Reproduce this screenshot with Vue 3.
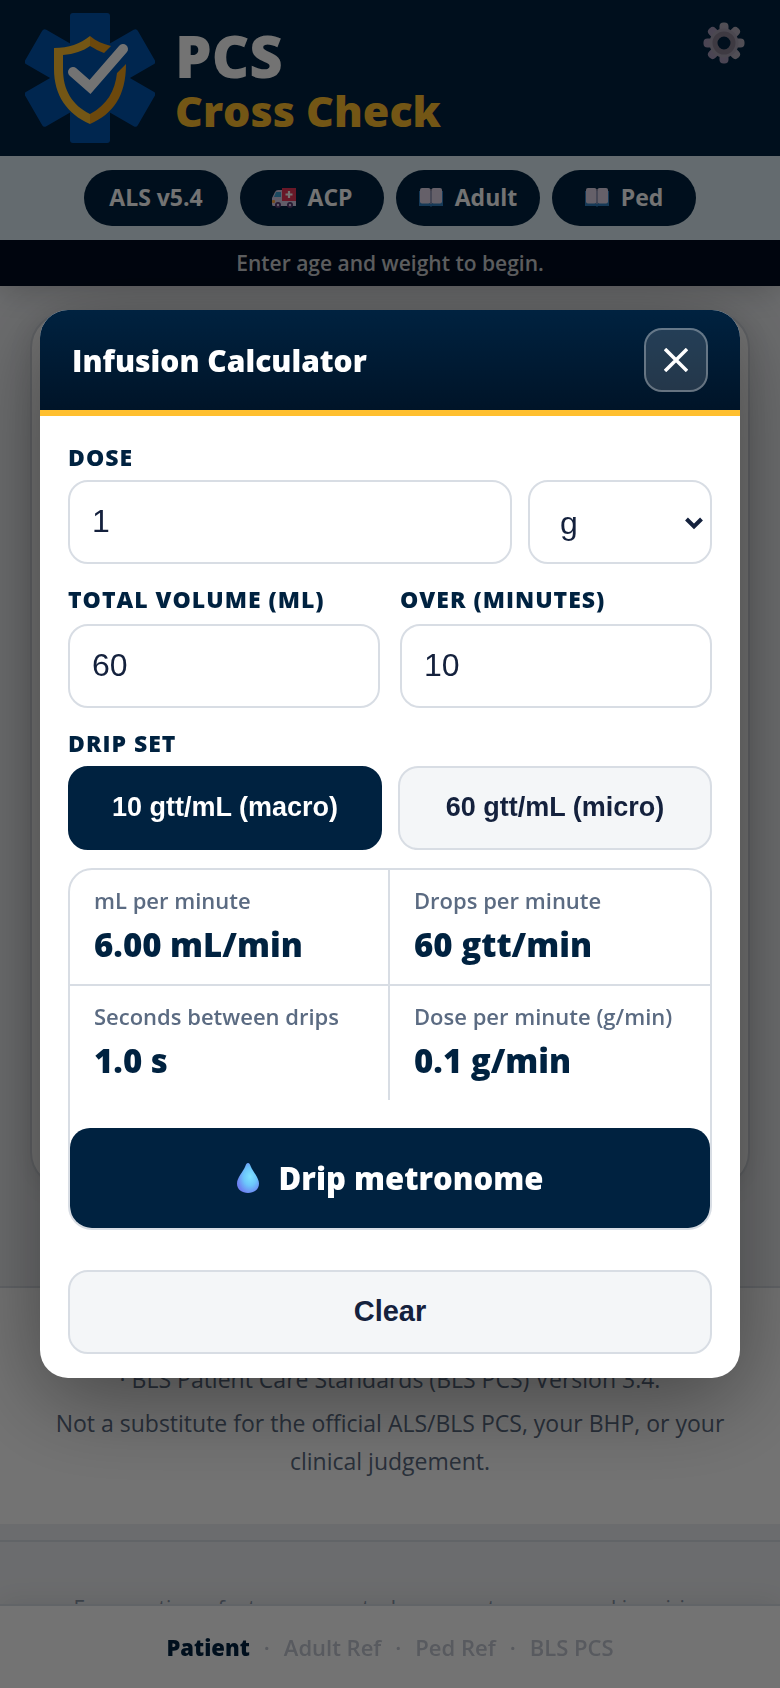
<template>
  <div class="page">
    <header class="site-header">
      <div class="brand-row">
        <svg class="logo" viewBox="0 0 130 130" aria-hidden="true">
          <g fill="#0055b0">
            <rect x="45" y="0" width="40" height="130" rx="3" />
            <rect x="45" y="0" width="40" height="130" rx="3" transform="rotate(60 65 65)" />
            <rect x="45" y="0" width="40" height="130" rx="3" transform="rotate(120 65 65)" />
          </g>
          <path
            d="M65 23C55 31 44 35 29 35V56C29 82 42 101 65 111V101C47 92 38 77 38 56V42C49 41 58 38 65 33Z"
            fill="#ffbf2f"
          />
          <path
            d="M65 23C71 28 78 31 86 33L79 40C74 38 70 36 65 33ZM101 51C101 83 88 101 65 111V101C82 92 90 78 92 60Z"
            fill="#ef9f1c"
          />
          <path
            d="M48 59L65 74L98 36"
            fill="none"
            stroke="#fff"
            stroke-width="10"
            stroke-linecap="round"
          />
        </svg>
        <div class="brand">
          <span class="brand-top">PCS</span>
          <span class="brand-bottom">Cross Check</span>
        </div>
        <button class="settings" type="button" aria-label="Settings">
          <svg viewBox="0 0 42 42" aria-hidden="true">
            <defs>
              <linearGradient id="gear" x1="0" y1="0" x2="0" y2="1">
                <stop offset="0" stop-color="#b4afbd" />
                <stop offset="1" stop-color="#a497b8" />
              </linearGradient>
            </defs>
            <g fill="url(#gear)">
              <rect
                v-for="a in [0, 45, 90, 135]"
                :key="a"
                x="16.5"
                y="0.5"
                width="9"
                height="41"
                rx="4"
                :transform="`rotate(${a} 21 21)`"
              />
            </g>
            <circle cx="21" cy="21" r="14.5" fill="#a79fb2" />
            <circle cx="21" cy="21" r="9" fill="#002240" stroke="#8a8293" stroke-width="5" />
          </svg>
        </button>
      </div>
      <div class="chips">
        <button v-for="chip in chips" :key="chip.label" class="chip" type="button">
          <svg v-if="chip.icon === 'ambulance'" class="chip-icon" viewBox="0 -2 24 24" aria-hidden="true">
            <path d="M10 1H24V18H10Z" fill="#e8375a" />
            <path d="M0 17V11L3 5Q4 3 6 3H10V14H24V19H1Q0 19 0 17Z" fill="#d9cfe8" />
            <path d="M2 10L4 5H9V10Z" fill="#3fa5d8" />
            <path d="M17 4V11M13.500 7.500H20.500" stroke="#fff" stroke-width="2.2" />
            <rect x="0" y="13" width="3" height="3" rx="1" fill="#ffa63d" />
            <circle cx="6" cy="18" r="3" fill="#54366e" />
            <circle cx="18" cy="18" r="3" fill="#54366e" />
            <circle cx="6" cy="18" r="1.2" fill="#d9cfe8" />
            <circle cx="18" cy="18" r="1.2" fill="#d9cfe8" />
          </svg>
          <svg v-if="chip.icon === 'book'" class="chip-icon" viewBox="0 -2 24 24" aria-hidden="true">
            <path d="M0 4H24V19H13L12 20L11 19H0Z" fill="#2f7fc0" />
            <rect x="1" y="1" width="10.5" height="15.5" rx="2" fill="#e0d6e8" />
            <rect x="12.5" y="1" width="10.5" height="15.5" rx="2" fill="#e0d6e8" />
            <path d="M12 2V17" stroke="#a79bb5" stroke-width="1.4" />
          </svg>
          <span>{{ chip.label }}</span>
        </button>
      </div>
      <div class="status">Enter age and weight to begin.</div>
    </header>

    <main class="content">
      <section class="card"></section>
    </main>

    <footer class="disclaimer">
      <p>Based on ALS Patient Care Standards Version 5.4<br />· BLS Patient Care Standards (BLS PCS) Version 3.4.</p>
      <p>Not a substitute for the official ALS/BLS PCS, your BHP, or your clinical judgement.</p>
    </footer>
    <div class="contact">For questions, feature requests, bug reports, or general inquiries</div>

    <nav class="bottom-nav">
      <template v-for="(tab, i) in tabs" :key="tab">
        <span v-if="i > 0" class="dot">·</span>
        <a href="#" :class="{ active: i === 0 }">{{ tab }}</a>
      </template>
    </nav>

    <div class="overlay">
      <div class="modal" role="dialog" aria-labelledby="modal-title">
        <div class="modal-header">
          <h2 id="modal-title">Infusion Calculator</h2>
          <button class="close" type="button" aria-label="Close">
            <svg viewBox="0 0 24 24" aria-hidden="true">
              <path d="M1 1L23 23M23 1L1 23" stroke="#fff" stroke-width="3.4" />
            </svg>
          </button>
        </div>

        <div class="modal-body">
          <label class="label" for="dose">Dose</label>
          <div class="dose-row">
            <input id="dose" v-model="dose" type="text" inputmode="decimal" />
            <div class="select-wrap">
              <select v-model="unit" aria-label="Dose unit">
                <option>g</option>
                <option>mg</option>
                <option>mcg</option>
              </select>
              <svg viewBox="0 0 20 14" aria-hidden="true">
                <path d="M2.500 3L10 10.500L17.500 3" fill="none" stroke="#14213d" stroke-width="4" />
              </svg>
            </div>
          </div>

          <div class="fields">
            <div class="field">
              <label class="label" for="volume">Total volume (mL)</label>
              <input id="volume" v-model="volume" type="text" inputmode="decimal" />
            </div>
            <div class="field">
              <label class="label" for="minutes">Over (minutes)</label>
              <input id="minutes" v-model="minutes" type="text" inputmode="decimal" />
            </div>
          </div>

          <div id="drip-label" class="label">Drip set</div>
          <div class="drip-row" role="group" aria-labelledby="drip-label">
            <button
              v-for="set in dripSets"
              :key="set.value"
              type="button"
              class="option"
              :class="{ selected: dripSet === set.value }"
              @click="dripSet = set.value"
            >
              {{ set.label }}
            </button>
          </div>

          <div class="results">
            <div class="result-grid">
              <div v-for="item in results" :key="item.label" class="result">
                <div class="result-label">{{ item.label }}</div>
                <div class="result-value">{{ item.value }}</div>
              </div>
            </div>
            <button class="metronome" type="button">
              <svg viewBox="0 0 22 30" aria-hidden="true">
                <defs>
                  <radialGradient id="drop" cx="0.6" cy="0.45" r="0.6">
                    <stop offset="0" stop-color="#7fe3ff" />
                    <stop offset="0.5" stop-color="#6cc6fb" />
                    <stop offset="1" stop-color="#6d80f2" />
                  </radialGradient>
                </defs>
                <path
                  d="M11 0C9.500 0 9 1.500 8.300 3.200C6 9 0 14.500 0 20.500C0 26.500 5 30 11 30S22 26.500 22 20.500C22 14.500 16 9 13.700 3.200C13 1.500 12.500 0 11 0Z"
                  fill="url(#drop)"
                />
              </svg>
              <span>Drip metronome</span>
            </button>
          </div>

          <button class="option clear" type="button" @click="clearAll">Clear</button>
        </div>
      </div>
    </div>
  </div>
</template>

<script setup>
import { computed, ref } from 'vue'

const chips = [
  { label: 'ALS v5.4' },
  { label: 'ACP', icon: 'ambulance' },
  { label: 'Adult', icon: 'book' },
  { label: 'Ped', icon: 'book' }
]

const tabs = ['Patient', 'Adult Ref', 'Ped Ref', 'BLS PCS']

const dripSets = [
  { value: 10, label: '10 gtt/mL (macro)' },
  { value: 60, label: '60 gtt/mL (micro)' }
]

const dose = ref('1')
const unit = ref('g')
const volume = ref('60')
const minutes = ref('10')
const dripSet = ref(10)

const results = computed(() => {
  const time = Number(minutes.value)
  const rate = Number(volume.value) / time
  const drops = rate * dripSet.value
  const ok = Number.isFinite(rate) && rate > 0
  const perMinute = Number((Number(dose.value) / time).toFixed(3))

  return [
    { label: 'mL per minute', value: ok ? `${rate.toFixed(2)} mL/min` : '—' },
    { label: 'Drops per minute', value: ok ? `${Math.round(drops)} gtt/min` : '—' },
    { label: 'Seconds between drips', value: ok ? `${(60 / drops).toFixed(1)} s` : '—' },
    {
      label: `Dose per minute (${unit.value}/min)`,
      value: ok ? `${perMinute} ${unit.value}/min` : '—'
    }
  ]
})

const clearAll = () => {
  dose.value = ''
  volume.value = ''
  minutes.value = ''
}
</script>

<style>
body {
  margin: 0;
  overflow: hidden;
  background: #eef0f3;
}
</style>

<style scoped>
* {
  box-sizing: border-box;
}

.page {
  height: 100vh;
  overflow: hidden;
  font-family: "Segoe UI", "Open Sans", sans-serif;
  color: #14213d;
}

button {
  font-family: inherit;
  cursor: pointer;
}

.site-header {
  position: relative;
  box-shadow: 0 4px 28px rgba(0, 0, 0, 0.2);
}

.brand-row {
  display: flex;
  align-items: flex-start;
  height: 156px;
  padding: 13px 35px 13px 25px;
  background: #002240;
}

.logo {
  width: 130px;
  height: 130px;
}

.brand {
  display: flex;
  flex-direction: column;
  flex: 1;
  padding: 13px 0 0 20px;
  font-weight: 800;
}

.brand-top {
  font-size: 58px;
  line-height: 60px;
  color: #fff;
}

.brand-bottom {
  font-size: 43px;
  line-height: 50px;
  color: #ffbf2f;
}

.settings {
  padding: 9px 0 0;
  border: 0;
  background: none;
}

.settings svg {
  display: block;
  width: 42px;
  height: 42px;
}

.chips {
  display: flex;
  justify-content: center;
  gap: 12px;
  padding: 14px;
  background: #deeef5;
}

.chip {
  display: flex;
  align-items: center;
  justify-content: center;
  gap: 12px;
  width: 144px;
  height: 56px;
  padding: 0 0 2px;
  border: 0;
  border-radius: 28px;
  background: #002240;
  color: #fff;
  font-size: 23px;
  font-weight: 700;
}

.chip-icon {
  width: 24px;
  height: 24px;
}

.status {
  background: #000d20;
  color: rgba(255, 255, 255, 0.82);
  font-size: 21px;
  font-weight: 600;
  line-height: 46px;
  text-align: center;
}

.content {
  padding: 26px 30px 98px;
}

.card {
  min-height: 876px;
  border: 2px solid #d4d8df;
  border-radius: 36px;
  background: #fff;
  box-shadow: 0 4px 24px rgba(0, 0, 0, 0.08);
}

.disclaimer {
  padding: 34px 50px 38px;
  border-top: 2px solid #d8dde4;
  background: #fff;
  color: #5b6b82;
  font-size: 23px;
  line-height: 38px;
  text-align: center;
}

.disclaimer p {
  margin: 0 0 6px;
}

.contact {
  margin-top: 16px;
  padding: 50px 20px;
  border-top: 2px solid #d8dde4;
  color: #8a96a8;
  font-size: 21px;
  line-height: 32px;
  text-align: center;
}

.bottom-nav {
  position: fixed;
  right: 0;
  bottom: 0;
  left: 0;
  display: flex;
  align-items: center;
  justify-content: center;
  gap: 14px;
  height: 84px;
  border-top: 2px solid #d8dde4;
  background: #fff;
  box-shadow: 0 -4px 28px rgba(0, 0, 0, 0.08);
  color: #c3c8d2;
  font-size: 22px;
  font-weight: 600;
}

.bottom-nav a {
  color: inherit;
  text-decoration: none;
}

.bottom-nav a.active {
  color: #002240;
  font-weight: 800;
}

.overlay {
  position: fixed;
  inset: 0;
  display: flex;
  align-items: center;
  justify-content: center;
  padding: 40px;
  background: rgba(0, 0, 0, 0.55);
}

.modal {
  width: 100%;
  border-radius: 28px;
  background: #fff;
  box-shadow: 0 20px 90px rgba(0, 0, 0, 0.4);
  overflow: hidden;
}

.modal-header {
  display: flex;
  align-items: center;
  justify-content: space-between;
  padding: 18px 32px;
  border-bottom: 6px solid #ffbf2f;
  background: linear-gradient(#002240, #001428);
}

.modal-header h2 {
  margin: 0;
  color: #fff;
  font-size: 30px;
  font-weight: 800;
}

.close {
  display: grid;
  place-items: center;
  width: 64px;
  height: 64px;
  padding: 0;
  border: 2px solid rgba(255, 255, 255, 0.3);
  border-radius: 18px;
  background: rgba(255, 255, 255, 0.14);
}

.close svg {
  width: 24px;
  height: 24px;
}

.modal-body {
  padding: 28px 28px 24px;
}

.label {
  display: block;
  margin-bottom: 10px;
  color: #002240;
  font-size: 23px;
  font-weight: 800;
  letter-spacing: 1px;
  line-height: 26px;
  text-transform: uppercase;
}

input,
select {
  display: block;
  width: 100%;
  height: 84px;
  padding: 0 22px 2px;
  border: 2px solid #d8dde4;
  border-radius: 20px;
  background: #fff;
  color: #14213d;
  font-family: "Liberation Sans", Arial, sans-serif;
  font-size: 32px;
}

.dose-row {
  display: grid;
  grid-template-columns: 1fr 184px;
  gap: 16px;
  margin-bottom: 22px;
}

.select-wrap {
  position: relative;
}

.select-wrap select {
  padding: 2px 30px 0;
  appearance: none;
}

.select-wrap svg {
  position: absolute;
  top: 36px;
  right: 8px;
  width: 20px;
  height: 14px;
  pointer-events: none;
}

.fields {
  display: grid;
  grid-template-columns: 1fr 1fr;
  gap: 20px;
  margin-bottom: 22px;
}

.field .label {
  margin-bottom: 12px;
}

.drip-row {
  display: grid;
  grid-template-columns: 1fr 1fr;
  gap: 16px;
}

.option {
  height: 84px;
  padding: 0 0 2px;
  border: 2px solid #d8dde4;
  border-radius: 20px;
  background: #f4f6f8;
  color: #14213d;
  font-family: "Liberation Sans", Arial, sans-serif;
  font-size: 27px;
  font-weight: 700;
}

.option.selected {
  border-color: #002240;
  background: #002240;
  color: #fff;
}

.results {
  margin-top: 18px;
  border: 2px solid #d8dde4;
  border-radius: 24px;
  overflow: hidden;
}

.result-grid {
  display: grid;
  grid-template-columns: 1fr 1fr;
}

.result {
  padding: 16px 24px;
}

.result:nth-child(odd) {
  border-right: 2px solid #d8dde4;
}

.result:nth-child(-n + 2) {
  border-bottom: 2px solid #d8dde4;
}

.result-label {
  margin-bottom: 8px;
  color: #5b6b82;
  font-size: 22px;
  font-weight: 600;
  line-height: 28px;
}

.result-value {
  color: #002240;
  font-size: 33px;
  font-weight: 800;
  line-height: 46px;
}

.metronome {
  display: flex;
  align-items: center;
  justify-content: center;
  gap: 20px;
  width: 100%;
  height: 100px;
  margin-top: 28px;
  padding: 0;
  border: 0;
  border-radius: 20px;
  background: #002240;
  color: #fff;
  font-size: 31px;
  font-weight: 800;
}

.metronome svg {
  width: 22px;
  height: 30px;
}

.clear {
  width: 100%;
  margin-top: 40px;
  font-size: 29px;
}
</style>
